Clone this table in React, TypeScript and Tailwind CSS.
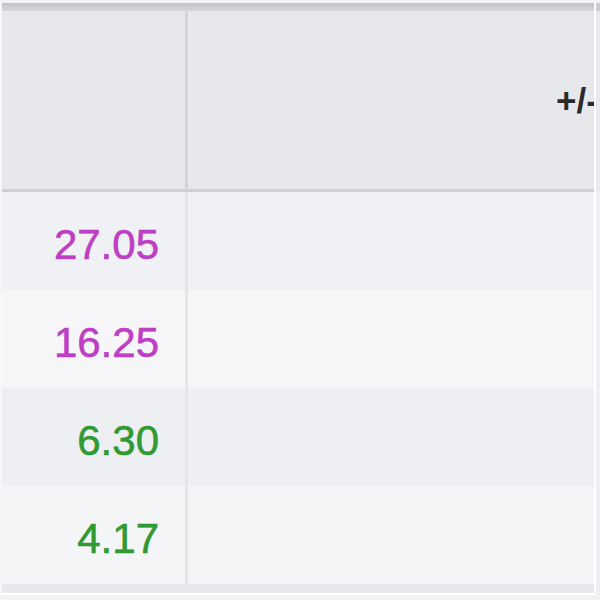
const rows = [
  { value: "27.05", color: "text-[#bd3fc4]", bg: "bg-[#f0f1f4]" },
  { value: "16.25", color: "text-[#bd3fc4]", bg: "bg-[#f6f6f8]" },
  { value: "6.30", color: "text-[#2f9a32]", bg: "bg-[#eeeff2]" },
  { value: "4.17", color: "text-[#2f9a32]", bg: "bg-[#f4f5f7]" },
];

export default function App() {
  return (
    <div className="w-[600px] h-[600px] overflow-hidden bg-[#f2f2f4] font-['Liberation_Sans',Arial,sans-serif]">
      <div className="h-[3px] bg-[#f3f3f5]" />
      <div className="flex w-[600px]">
        <div className="w-[594px] border-l-2 border-[#f7f7f9]">
          {/* header */}
          <div className="h-[8px] bg-gradient-to-b from-[#c2c3c6] to-[#d6d7da]" />
          <div className="flex h-[181px] bg-[#e7e8ec] border-b-[3px] border-[#cfd0d3]">
            <div className="w-[186px] border-r-[3px] border-[#d4d5d9]" />
            <div className="flex-1 overflow-hidden flex items-center">
              <span className="ml-[368px] mt-[2px] whitespace-nowrap text-[35px] font-bold text-[#2b2b2e]">+/-</span>
            </div>
          </div>
          {/* body */}
          {rows.map((r) => (
            <div key={r.value} className={`flex h-[98px] ${r.bg}`}>
              <div className="w-[186px] border-r-[3px] border-[#e5e6e9] flex items-center justify-end pr-[26px] pt-[8px]">
                <span className={`text-[42px] leading-none [-webkit-text-stroke:0.6px_currentColor] ${r.color}`}>{r.value}</span>
              </div>
              <div className="flex-1" />
            </div>
          ))}
          <div className="h-[9px] bg-[#e8e9ec]" />
          <div className="h-[2px] bg-white" />
        </div>
        <div className="w-[2px] bg-white" />
        <div className="flex-1 flex flex-col">
          <div className="h-[8px] bg-[#cdced1]" />
          <div className="h-[181px] bg-[#e9eaee]" />
          <div className="flex-1 bg-[#eff0f3]" />
        </div>
      </div>
    </div>
  );
}
